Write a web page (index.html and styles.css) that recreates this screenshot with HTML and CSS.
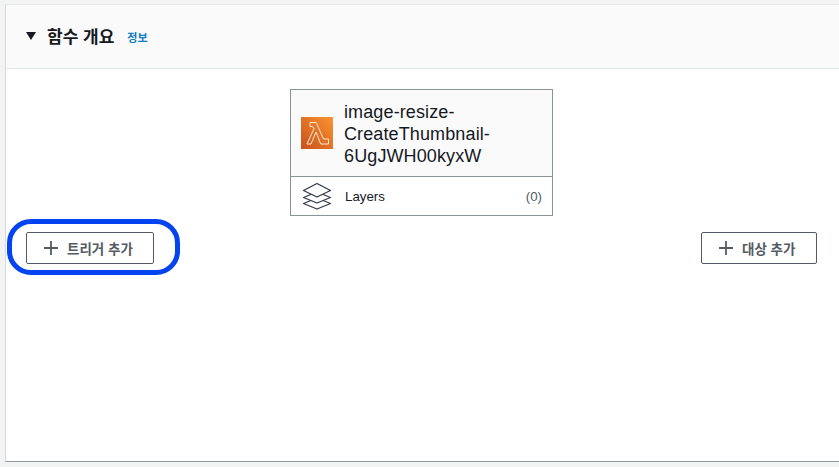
FILE: index.html
```html
<!DOCTYPE html>
<html lang="ko">
<head>
<meta charset="utf-8">
<title>함수 개요</title>
<link rel="stylesheet" href="styles.css">
</head>
<body>
<section class="panel">
  <header class="panel-head">
    <svg class="caret" width="10" height="8" viewBox="0 0 10 8"><path d="M0 0h10L5 8z" fill="#16191f"/></svg>
    <h2 class="title">함수 개요</h2>
    <a class="info">정보</a>
  </header>
  <div class="canvas">
    <div class="fn-card">
      <div class="fn-main">
        <svg class="lambda" width="32" height="32" viewBox="0 0 32 32">
          <defs><linearGradient id="lg" x1="0" y1="1" x2="1" y2="0"><stop offset="0" stop-color="#c8511b"/><stop offset="1" stop-color="#fb9431"/></linearGradient></defs>
          <rect width="32" height="32" fill="url(#lg)"/>
          <path d="M9 5.500h6.200l7.300 16.500h5v5h-7.800L15 15 10 27H6l7.200-15.800L11 9.500H9z" fill="none" stroke="#fde8d4" stroke-width="1"/>
        </svg>
        <div class="fn-name">image-resize-<br>CreateThumbnail-<br>6UgJWH00kyxW</div>
      </div>
      <div class="fn-layers">
        <svg class="layers-icon" width="30" height="28" viewBox="0 0 30 28" fill="#fff" stroke="#2f3b4a" stroke-width="1.300" stroke-linejoin="round">
          <path d="M15 16 1.500 21.500 15 27 28.500 21.500z"/>
          <path d="M15 10 1.500 15.500 15 21 28.500 15.500z"/>
          <path d="M15 1.500 1.500 8.500 15 15 28.500 8.500z"/>
        </svg>
        <span class="layers-label">Layers</span>
        <span class="layers-count">(0)</span>
      </div>
    </div>
    <div class="actions">
      <div class="highlight">
        <button class="btn btn-trigger"><svg width="14" height="14" viewBox="0 0 14 14"><path d="M7 0v14M0 7h14" stroke="#545b64" stroke-width="1.800"/></svg>트리거 추가</button>
      </div>
      <button class="btn btn-target"><svg width="14" height="14" viewBox="0 0 14 14"><path d="M7 0v14M0 7h14" stroke="#545b64" stroke-width="1.800"/></svg>대상 추가</button>
    </div>
  </div>
</section>
</body>
</html>
```
FILE: styles.css
```css
* { box-sizing: border-box; }
html, body { margin: 0; height: 100%; }
body {
  background: #f2f3f3;
  font-family: "Liberation Sans", "Noto Sans CJK KR", sans-serif;
  color: #16191f;
  padding: 4px 0 5px 5px;
  overflow: hidden;
}
.panel {
  height: 458px;
  background: #fff;
  border-left: 1px solid #d5dbdb;
  border-top: 1px solid #eaeded;
  border-bottom: 1px solid #8d9a9e;
}
.panel-head {
  height: 64px;
  background: #fafafa;
  border-bottom: 1px solid #e4e9e9;
  display: flex;
  align-items: center;
  padding: 0 0 2px 20px;
}
.caret { flex: none; }
.title {
  margin: 0 0 0 11px;
  font-size: 17px;
  line-height: 22px;
  font-weight: 700;
  font-family: "Noto Sans CJK KR", sans-serif;
}
.info {
  margin-left: 13px;
  font-size: 11px;
  font-weight: 700;
  color: #0f7cc2;
  font-family: "Noto Sans CJK KR", sans-serif;
  position: relative;
  top: 1px;
}
.canvas { padding: 20px 2px 0 0; }
.fn-card {
  width: 263px;
  height: 127px;
  margin: 0 auto;
  border: 1px solid #879596;
  background: #fff;
}
.fn-main {
  height: 87px;
  background: #fafafa;
  border-bottom: 1px solid #879596;
  display: flex;
  align-items: center;
  padding-left: 10px;
}
.lambda { flex: none; }
.fn-name {
  margin-left: 11px;
  padding-top: 2px;
  font-family: "Liberation Sans", sans-serif;
  font-size: 18px;
  letter-spacing: .12px;
  line-height: 22px;
  color: #16191f;
}
.fn-layers {
  height: 38px;
  display: flex;
  align-items: center;
  padding: 0 10px 0 11px;
  font-family: "Liberation Sans", sans-serif;
  font-size: 13.300px;
}
.layers-icon { flex: none; }
.layers-label { margin-left: 13px; }
.layers-count { margin-left: auto; color: #545b64; }
.actions {
  margin-top: 16px;
  display: flex;
  justify-content: space-between;
  padding: 0 20px 0 20px;
}
.highlight { position: relative; }
.highlight::after {
  content: "";
  box-sizing: border-box;
  position: absolute;
  left: -19px;
  top: -13px;
  width: 173px;
  height: 56px;
  border: 5px solid #0343f0;
  border-radius: 24px;
  pointer-events: none;
}
.btn {
  height: 32px;
  background: #fff;
  border: 1px solid #545b64;
  border-radius: 2px;
  color: #545b64;
  font-family: "Noto Sans CJK KR", sans-serif;
  font-size: 13.500px;
  font-weight: 700;
  display: flex;
  align-items: center;
  padding: 0 0 0 17px;
}
.btn svg { margin-right: 9px; }
.btn-trigger { width: 128px; }
.btn-target { width: 116px; }
```
